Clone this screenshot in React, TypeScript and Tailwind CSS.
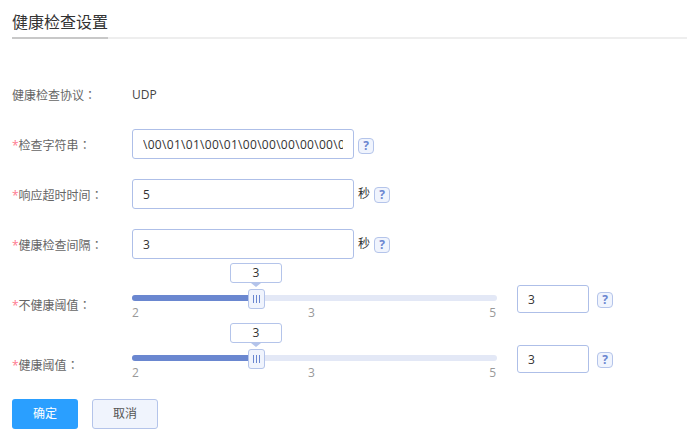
const FONT = "font-['Open_Sans','Noto_Sans_CJK_SC',sans-serif]";

const Help = () => (
  <span className="flex h-4 w-4 shrink-0 items-center justify-center rounded-sm border border-[#b4c4ea] bg-[#f0f4fd] text-xs font-bold text-[#6a86d0]">
    ?
  </span>
);

const Label = ({ text, required = true }: { text: string; required?: boolean }) => (
  <div className="w-[132px] shrink-0 self-start pl-3 pt-px text-xs leading-[30px] text-[#666]">
    {required && <span className="text-[#ff7a8f]">*</span>}
    {text}
    <span className="font-['Noto_Sans_CJK_TC',sans-serif]">：</span>
  </div>
);

const TextRow = ({ label, value, unit, wide }: { label: string; value: string; unit?: string; wide?: boolean }) => (
  <div className="mt-5 flex h-[30px] items-center">
    <Label text={label} />
    <input
      readOnly
      value={value}
      className={`h-[30px] w-[222px] rounded-[3px] border border-[#aebfe8] bg-white px-2.5 text-xs text-[#333] outline-none ${wide ? "tracking-[0.3px]" : ""}`}
    />
    {unit && <span className="ml-1 text-xs text-[#333]">{unit}</span>}
    <span className={wide ? "ml-1 mt-1" : "ml-1 mt-0.5"}>
      <Help />
    </span>
  </div>
);

const SliderRow = ({ label }: { label: string }) => (
  <div className="flex h-[60px] items-start">
    <div className="mt-[26px]">
      <Label text={label} />
    </div>
    <div className="w-[365px] pt-8">
      <div className="relative h-1.5 rounded-full bg-[#e3e8f6]">
        <div className="h-1.5 w-[120px] rounded-full bg-[#6a87d0]" />
        <div className="absolute -top-8 left-[98px] flex h-5 w-[52px] items-center justify-center rounded-[3px] border border-[#b4c4ea] bg-white text-xs text-[#333]">
          3
        </div>
        <div className="absolute -top-3 left-[119px] h-0 w-0 border-x-[5px] border-t-[4px] border-x-transparent border-t-[#b4c4ea]" />
        <div className="absolute -top-1.5 left-[116px] flex h-5 w-[17px] items-center justify-center gap-[2px] rounded-[3px] border border-[#b4c4ea] bg-[#f0f4fd]">
          <span className="h-2 w-px bg-[#6a87d0]" />
          <span className="h-2 w-px bg-[#6a87d0]" />
          <span className="h-2 w-px bg-[#6a87d0]" />
        </div>
      </div>
      <div className="mt-[4px] flex text-xs leading-4 text-[#999]">
        <span>2</span>
        <span className="ml-[169px]">3</span>
        <span className="ml-auto mr-[1px]">5</span>
      </div>
    </div>
    <input
      readOnly
      value="3"
      className="ml-5 mt-[22px] h-7 w-[72px] rounded-[3px] border border-[#aebfe8] bg-white px-2.5 text-xs text-[#333] outline-none"
    />
    <span className="ml-2 mt-[29px]">
      <Help />
    </span>
  </div>
);

export default function App() {
  return (
    <div className={`h-[440px] w-[687px] overflow-hidden bg-white ${FONT}`}>
      <div className="ml-3 flex h-[39px] items-end border-b-2 border-[#eeeeee]">
        <h2 className="-mb-[2px] h-[39px] border-b-2 border-[#c8c8c8] pt-[10px] text-base leading-6 text-[#333]">
          健康检查设置
        </h2>
      </div>

      <div className="mt-10 flex h-[30px] items-center">
        <Label text="健康检查协议" required={false} />
        <span className="self-start pt-px text-xs leading-[30px] text-[#444]">UDP</span>
      </div>
      <TextRow label="检查字符串" value={"\\00\\01\\01\\00\\01\\00\\00\\00\\00\\00\\00\\00"} wide />
      <TextRow label="响应超时时间" value="5" unit="秒" />
      <TextRow label="健康检查间隔" value="3" unit="秒" />

      <div className="mt-1">
        <SliderRow label="不健康阈值" />
        <SliderRow label="健康阈值" />
      </div>

      <div className="ml-3 mt-4 flex gap-3.5">
        <button className="h-[30px] w-[66px] rounded-[3px] bg-[#2a9fff] text-xs text-white">确定</button>
        <button className="h-[30px] w-[66px] rounded-[3px] border border-[#b4c4ea] bg-[#f0f4fd] text-xs text-[#555]">
          取消
        </button>
      </div>
    </div>
  );
}
